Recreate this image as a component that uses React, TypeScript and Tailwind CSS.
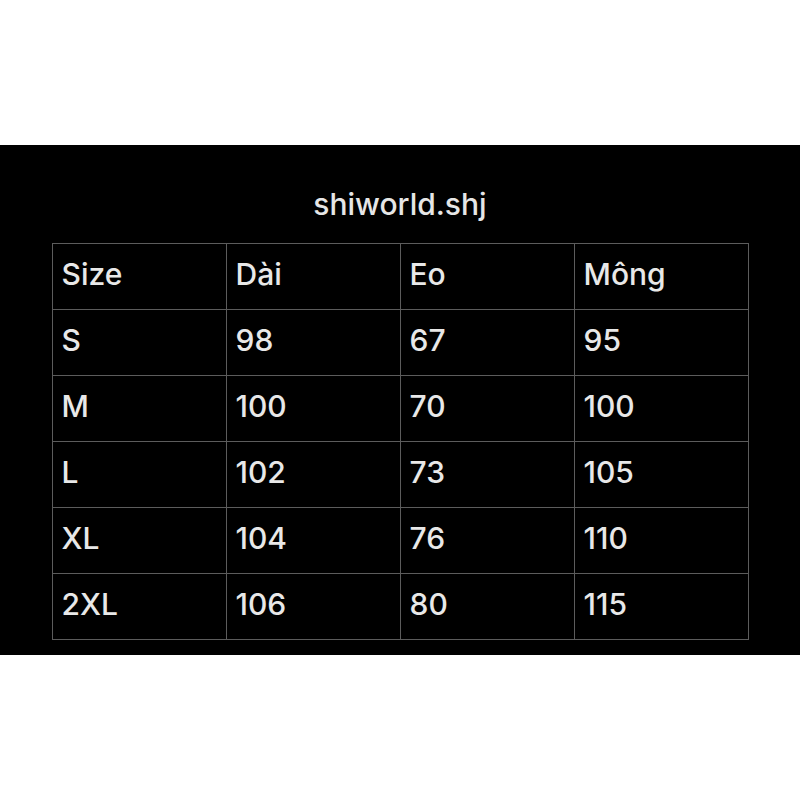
import React from 'react';

// Size chart: header row + one row per size
const rows: string[][] = [
  ['Size', 'Dài', 'Eo', 'Mông'],
  ['S', '98', '67', '95'],
  ['M', '100', '70', '100'],
  ['L', '102', '73', '105'],
  ['XL', '104', '76', '110'],
  ['2XL', '106', '80', '115'],
];

export default function App() {
  return (
    <div className="w-[800px] h-[800px] bg-white pt-[145px]" style={{ fontFamily: 'Inter, "Noto Sans", sans-serif' }}>
      <div className="h-[510px] bg-black flex flex-col items-center">
        <div className="mt-[41px] text-[30px] leading-[36px] font-medium text-[#e6e6e6]">shiworld.shj</div>
        <table className="mt-[21px] border-collapse">
          <tbody>
            {rows.map((r, i) => (
              <tr key={i}>
                {r.map((c, j) => (
                  <td
                    key={j}
                    className="w-[174px] h-[66px] border border-[#5c5c5c] pl-[9px] pb-[4px] align-middle text-[30px] font-medium text-[#e8e8e8]"
                  >
                    {c}
                  </td>
                ))}
              </tr>
            ))}
          </tbody>
        </table>
      </div>
    </div>
  );
}
